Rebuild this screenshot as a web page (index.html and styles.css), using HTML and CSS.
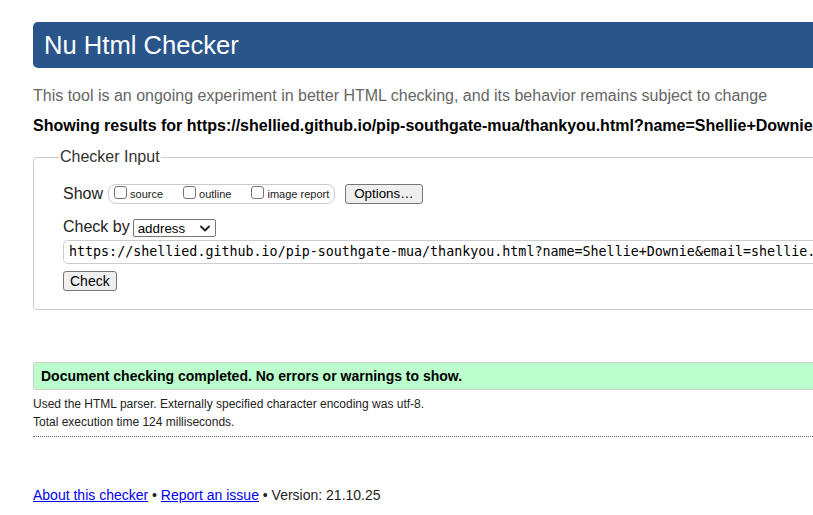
FILE: index.html
```html
<!DOCTYPE html>
<html lang="en">
<head>
<meta charset="utf-8">
<title>Showing results for https://shellied.github.io/pip-southgate-mua/thankyou.html - Nu Html Checker</title>
<link rel="stylesheet" href="styles.css">
</head>
<body>
<div class="page">
  <h1 class="title">Nu Html Checker</h1>
  <p class="tagline">This tool is an ongoing experiment in better HTML checking, and its behavior remains subject to change</p>
  <p class="results-for">Showing results for https://shellied.github.io/pip-southgate-mua/thankyou.html?name=Shellie+Downie&amp;email=shellie.downie%40gmail.com</p>
  <form class="checker">
    <fieldset class="input-set">
      <legend class="legend">Checker Input</legend>
      <div class="row show-row">
        <span class="label">Show</span>
        <span class="show-box">
          <label class="opt"><span class="cb"></span>source</label>
          <label class="opt"><span class="cb"></span>outline</label>
          <label class="opt"><span class="cb"></span>image report</label>
        </span>
        <span class="btn options-btn">Options…</span>
      </div>
      <div class="row checkby-row">
        <span class="label">Check by</span>
        <span class="select">address
          <svg class="chev" width="10" height="7" viewBox="0 0 10 7"><path d="M1 1.5 L5 5.5 L9 1.5" fill="none" stroke="#222" stroke-width="1.8" stroke-linecap="round" stroke-linejoin="round"/></svg>
        </span>
      </div>
      <div class="url">https://shellied.github.io/pip-southgate-mua/thankyou.html?name=Shellie+Downie&amp;email=shellie.downie%40gmail.com</div>
      <div class="row"><span class="btn check-btn">Check</span></div>
    </fieldset>
  </form>
  <p class="success">Document checking completed. No errors or warnings to show.</p>
  <p class="details">Used the HTML parser. Externally specified character encoding was utf-8.</p>
  <p class="details">Total execution time 124 milliseconds.</p>
  <hr class="dotted">
  <p class="footer"><a href="#">About this checker</a> • <a href="#">Report an issue</a> • Version: 21.10.25</p>
</div>
</body>
</html>
```
FILE: styles.css
```css
html { overflow: hidden; }
body {
  margin: 0;
  font-family: "Liberation Sans", Arial, sans-serif;
  color: #000;
  background: #fff;
}
.page {
  width: 1100px;
  padding: 22px 0 0 33px;
}
.title {
  margin: 0;
  height: 46px;
  line-height: 46px;
  padding-left: 11px;
  background: #29558a;
  color: #fff;
  font-weight: normal;
  font-size: 25.6px;
  border-radius: 5px;
}
.tagline {
  margin: 19px 0 0;
  line-height: 18px;
  font-size: 16px;
  color: #666;
}
.results-for {
  margin: 12px 0 0;
  line-height: 18px;
  font-size: 16px;
  font-weight: bold;
  white-space: nowrap;
  overflow: hidden;
}
.checker { margin: 13px 0 0; }
.input-set {
  margin: 0;
  border: 1px solid #ccc;
  border-radius: 4px;
  padding: 8px 29px 18px;
}
.legend {
  font-size: 16px;
  color: #333;
  padding: 0 1px;
  margin-left: -4px;
  line-height: 18px;
}
.row {
  display: flex;
  align-items: center;
}
.label {
  font-size: 16px;
  line-height: 18px;
  color: #222;
}
.show-row { margin-top: 10px; gap: 0; }
.show-box {
  display: flex;
  align-items: center;
  margin-left: 5px;
  height: 18px;
  padding: 0 5px 0 5px;
  border: 1px solid #ccc;
  border-radius: 8px;
  gap: 20px;
}
.opt {
  display: flex;
  align-items: center;
  font-size: 11px;
  color: #222;
}
.cb {
  width: 11px;
  height: 11px;
  border: 1px solid #777;
  border-radius: 3px;
  margin-right: 3px;
  background: #fff;
  position: relative;
  top: -2px;
}
.btn {
  display: inline-block;
  font-family: "Liberation Sans", Arial, sans-serif;
  font-size: 13.33px;
  line-height: 18px;
  padding: 0 7px;
  background: #efefef;
  border: 1px solid #767676;
  border-radius: 3px;
  color: #000;
}
.options-btn { margin-left: 10px; padding: 0 8px; }
.checkby-row { margin-top: 14px; }
.select {
  display: flex;
  align-items: center;
  margin-left: 3px;
  width: 77px;
  height: 16px;
  box-sizing: content-box;
  border: 1px solid #767676;
  border-radius: 2px;
  padding: 0 0 0 4px;
  font-size: 13.33px;
  position: relative;
  top: 1px;
}
.chev { margin-left: auto; margin-right: 5px; }
.url {
  margin-top: 4px;
  height: 22px;
  line-height: 22px;
  border: 1px solid #ccc;
  border-radius: 5px;
  padding-left: 5px;
  font-family: "DejaVu Sans Mono", "Liberation Mono", monospace;
  font-size: 13.33px;
  white-space: nowrap;
  overflow: hidden;
}
.url + .row { margin-top: 7px; }
.check-btn { padding: 0 6px; font-size: 14px; }
.success {
  margin: 52px 0 0;
  height: 26px;
  line-height: 26px;
  background: #bfc;
  border: 1px solid #ccc;
  border-radius: 3px;
  padding-left: 7px;
  font-size: 14px;
  font-weight: bold;
}
.details {
  margin: 0;
  font-size: 12px;
  line-height: 18px;
  color: #222;
}
.success + .details { margin-top: 5px; }
.dotted {
  margin: 5px 0 0;
  border: 0;
  border-top: 1px dotted #666;
  height: 0;
}
.footer {
  margin: 49px 0 0;
  font-size: 14px;
  line-height: 18px;
  color: #222;
}
.footer a { color: #00e; text-decoration: underline; }
```
